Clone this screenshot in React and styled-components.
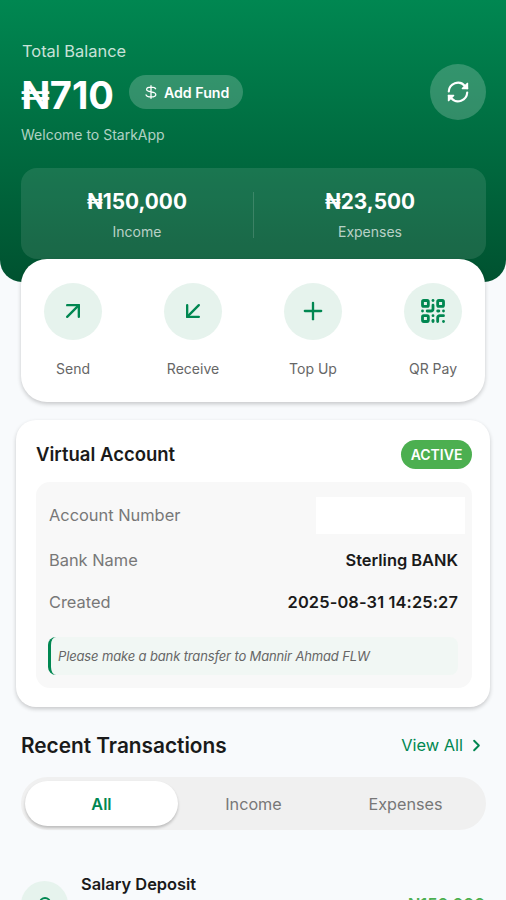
import React from 'react'
import styled, { createGlobalStyle } from 'styled-components'
import { ArrowUpRight, ArrowDownLeft, Plus, QrCode, ChevronRight } from 'lucide-react'

const actions = [
  { label: 'Send', icon: ArrowUpRight },
  { label: 'Receive', icon: ArrowDownLeft },
  { label: 'Top Up', icon: Plus },
  { label: 'QR Pay', icon: QrCode, stroke: 2.4 },
]

const tabs = ['All', 'Income', 'Expenses']

const App = () => {
  return (
    <Page>
      <GlobalStyle />
      <Header>
        <BalanceRow>
          <div>
            <BalanceLabel>Total Balance</BalanceLabel>
            <AmountRow>
              <Amount>₦710</Amount>
              <AddFund>
                <svg width="12" height="14" viewBox="0 0 12 14" fill="none" stroke="currentColor" strokeWidth="1.3" strokeLinecap="round">
                  <path d="M6 .7v12.6M10.6 3.7C10 2.6 8.5 2.1 6 2.1c-2.6 0-4.4.8-4.4 2.4C1.6 7.6 10.8 6.2 10.8 9.4c0 1.6-1.9 2.500-4.700 2.500-2.700 0-4.500-.7-5-2" />
                </svg>
                <span>Add Fund</span>
              </AddFund>
            </AmountRow>
            <Welcome>Welcome to StarkApp</Welcome>
          </div>
          <RefreshButton>
            <svg width="26" height="26" viewBox="0 0 24 24" fill="none" stroke="currentColor" strokeWidth="2" strokeLinecap="round" strokeLinejoin="round">
              <path d="M3.500 11.500a8.500 8.500 0 0 1 14.700-5.300l2.300 2.300" />
              <path d="M20.500 12.500a8.500 8.500 0 0 1-14.700 5.300l-2.300-2.300" />
              <path d="M20.800 4v4.800H16z" fill="currentColor" strokeWidth="1.200" />
              <path d="M3.200 20v-4.800H8z" fill="currentColor" strokeWidth="1.200" />
            </svg>
          </RefreshButton>
        </BalanceRow>
        <Stats>
          <Stat>
            <StatValue>₦150,000</StatValue>
            <StatLabel>Income</StatLabel>
          </Stat>
          <Divider />
          <Stat>
            <StatValue>₦23,500</StatValue>
            <StatLabel>Expenses</StatLabel>
          </Stat>
        </Stats>
      </Header>

      <Actions>
        {actions.map(({ label, icon: Icon, stroke = 2 }) => (
          <Action key={label}>
            <ActionIcon>
              <Icon size={28} strokeWidth={stroke} />
            </ActionIcon>
            <ActionLabel>{label}</ActionLabel>
          </Action>
        ))}
      </Actions>

      <AccountCard>
        <AccountHead>
          <AccountTitle>Virtual Account</AccountTitle>
          <Badge>ACTIVE</Badge>
        </AccountHead>
        <Details>
          <DetailRow $height={38}>
            <DetailLabel>Account Number</DetailLabel>
            <HiddenNumber />
          </DetailRow>
          <DetailRow $height={51}>
            <DetailLabel>Bank Name</DetailLabel>
            <DetailValue>Sterling BANK</DetailValue>
          </DetailRow>
          <DetailRow $height={34}>
            <DetailLabel>Created</DetailLabel>
            <DetailValue $spacing="0.13px">2025-08-31 14:25:27</DetailValue>
          </DetailRow>
          <Note>Please make a bank transfer to Mannir Ahmad FLW</Note>
        </Details>
      </AccountCard>

      <SectionHead>
        <SectionTitle>Recent Transactions</SectionTitle>
        <ViewAll>
          View All
          <ChevronRight size={19} strokeWidth={2.4} />
        </ViewAll>
      </SectionHead>

      <Tabs>
        {tabs.map((tab) => (
          <Tab key={tab} $active={tab === 'All'}>{tab}</Tab>
        ))}
      </Tabs>

      <Transaction>
        <TransactionIcon>
          <svg width="20" height="20" viewBox="0 0 20 20" fill="none" stroke="currentColor" strokeWidth="2">
            <circle cx="10" cy="8" r="5" />
            <path d="M3 19c1-4 13-4 14 0" />
          </svg>
        </TransactionIcon>
        <TransactionText>
          <TransactionName>Salary Deposit</TransactionName>
        </TransactionText>
        <TransactionAmount>₦150,000</TransactionAmount>
      </Transaction>
    </Page>
  )
}

const GlobalStyle = createGlobalStyle`
  * {
    box-sizing: border-box;
  }
  body {
    margin: 0;
    font-family: Inter, "Liberation Sans", sans-serif;
    background: #f8fafc;
  }
  svg {
    display: block;
    flex-shrink: 0;
  }
`

const Page = styled.div`
  width: 506px;
  height: 900px;
  overflow: hidden;
  background: #f8fafc;
`
const Header = styled.header`
  height: 282px;
  padding: 40px 20px 0 21px;
  border-radius: 0 0 22px 22px;
  background: linear-gradient(180deg, #008751 0%, #005230 100%);
  color: #fff;
`
const BalanceRow = styled.div`
  display: flex;
  justify-content: space-between;
  height: 128px;
`
const BalanceLabel = styled.div`
  padding-left: 1px;
  font-size: 16.4px;
  line-height: 22px;
  color: rgba(255, 255, 255, 0.8);
`
const AmountRow = styled.div`
  display: flex;
  align-items: center;
  gap: 15px;
  height: 60px;
`
const Amount = styled.div`
  font-size: 38px;
  font-weight: 700;
  line-height: 44px;
  padding-top: 5px;
`
const AddFund = styled.div`
  display: flex;
  align-items: center;
  gap: 7px;
  height: 34px;
  padding: 0 14px 0 16px;
  border-radius: 17px;
  background: rgba(255, 255, 255, 0.2);
  font-size: 14.2px;
  font-weight: 600;
`
const Welcome = styled.div`
  font-size: 14px;
  line-height: 20px;
  margin-top: 3px;
  color: rgba(255, 255, 255, 0.7);
`
const RefreshButton = styled.div`
  display: flex;
  align-items: center;
  justify-content: center;
  width: 56px;
  height: 56px;
  margin-top: 24px;
  border-radius: 50%;
  background: rgba(255, 255, 255, 0.2);
`
const Stats = styled.div`
  display: flex;
  height: 91px;
  border-radius: 16px;
  background: rgba(255, 255, 255, 0.1);
`
const Stat = styled.div`
  flex: 1;
  text-align: center;
  padding-top: 20px;
`
const StatValue = styled.div`
  font-size: 20.8px;
  font-weight: 700;
  line-height: 28px;
`
const StatLabel = styled.div`
  font-size: 14px;
  line-height: 20px;
  margin-top: 6px;
  color: rgba(255, 255, 255, 0.7);
`
const Divider = styled.div`
  width: 1px;
  height: 46px;
  margin-top: 24px;
  background: rgba(255, 255, 255, 0.15);
`
const Actions = styled.div`
  position: relative;
  display: flex;
  justify-content: space-between;
  height: 143px;
  margin: -23px 21px 0;
  padding: 24px 23px 0 23px;
  border-radius: 26px;
  background: #fff;
  box-shadow: 0 2px 4px rgba(0, 0, 0, 0.2);
`
const Action = styled.div`
  display: flex;
  flex-direction: column;
  align-items: center;
  width: 58px;
`
const ActionIcon = styled.div`
  display: flex;
  align-items: center;
  justify-content: center;
  width: 58px;
  height: 57px;
  padding-bottom: 1px;
  border-radius: 50%;
  background: #e6f3ed;
  color: #008751;
`
const ActionLabel = styled.div`
  margin-top: 19px;
  font-size: 14px;
  line-height: 20px;
  color: #666;
  white-space: nowrap;
`
const AccountCard = styled.section`
  height: 287px;
  margin: 18px 16px 0;
  padding: 18px 18px 0 20px;
  border-radius: 20px;
  background: #fff;
  box-shadow: 0 2px 4px rgba(0, 0, 0, 0.2);
`
const AccountHead = styled.div`
  display: flex;
  align-items: center;
  justify-content: space-between;
  height: 32px;
`
const AccountTitle = styled.h2`
  margin: 0;
  font-size: 18.5px;
  font-weight: 600;
  color: #1a1a1a;
`
const Badge = styled.div`
  display: flex;
  align-items: center;
  justify-content: center;
  width: 71px;
  height: 29px;
  border-radius: 15px;
  background: #4caf50;
  color: #fff;
  font-size: 14px;
  font-weight: 600;
`
const Details = styled.div`
  height: 206px;
  margin-top: 12px;
  padding: 14px 14px 0 12px;
  border-radius: 14px;
  background: #f8f8f8;
`
const DetailRow = styled.div`
  display: flex;
  align-items: center;
  justify-content: space-between;
  height: ${(props) => props.$height}px;
`
const DetailLabel = styled.div`
  padding-left: 1px;
  font-size: 16.4px;
  color: #777;
`
const DetailValue = styled.div`
  font-size: 16.4px;
  font-weight: 600;
  letter-spacing: ${(props) => props.$spacing || 'normal'};
  color: #1a1a1a;
`
const HiddenNumber = styled.div`
  width: 149px;
  height: 37px;
  margin-right: -7px;
  background: #fff;
`
const Note = styled.div`
  display: flex;
  align-items: center;
  height: 38px;
  margin-top: 18px;
  padding-left: 7px;
  border-left: 3px solid #008751;
  border-radius: 8px;
  background: #f1f7f4;
  color: #666;
  font-size: 13px;
  font-style: italic;
  letter-spacing: -0.14px;
`
const SectionHead = styled.div`
  display: flex;
  align-items: center;
  justify-content: space-between;
  height: 30px;
  margin: 23px 20px 0 21px;
`
const SectionTitle = styled.h2`
  margin: 0;
  font-size: 20.8px;
  font-weight: 600;
  color: #1a1a1a;
`
const ViewAll = styled.div`
  display: flex;
  align-items: center;
  gap: 4px;
  font-size: 16.4px;
  color: #008751;
`
const Tabs = styled.div`
  display: grid;
  grid-template-columns: 153px 1fr 153px;
  height: 53px;
  margin: 17px 20px 0 21px;
  padding: 4px;
  border-radius: 27px;
  background: #f0f0f0;
`
const Tab = styled.div`
  display: flex;
  align-items: center;
  justify-content: center;
  padding-top: 1px;
  border-radius: 23px;
  font-size: 16.2px;
  font-weight: ${(props) => (props.$active ? 600 : 400)};
  color: ${(props) => (props.$active ? '#008751' : '#777')};
  background: ${(props) => (props.$active ? '#fff' : 'transparent')};
  box-shadow: ${(props) => (props.$active ? '0 2px 3px rgba(0, 0, 0, 0.22)' : 'none')};
`
const Transaction = styled.div`
  display: flex;
  margin: 43px 21px 0;
`
const TransactionIcon = styled.div`
  display: flex;
  align-items: center;
  justify-content: center;
  width: 47px;
  height: 47px;
  margin-top: 8px;
  border-radius: 50%;
  background: #e6f3ed;
  color: #008751;
`
const TransactionText = styled.div`
  flex: 1;
  margin-left: 13px;
`
const TransactionName = styled.div`
  font-size: 16.4px;
  font-weight: 600;
  line-height: 22px;
  color: #1a1a1a;
`
const TransactionAmount = styled.div`
  margin-top: 19px;
  font-size: 16.4px;
  font-weight: 600;
  line-height: 24px;
  color: #4caf50;
`

export default App
